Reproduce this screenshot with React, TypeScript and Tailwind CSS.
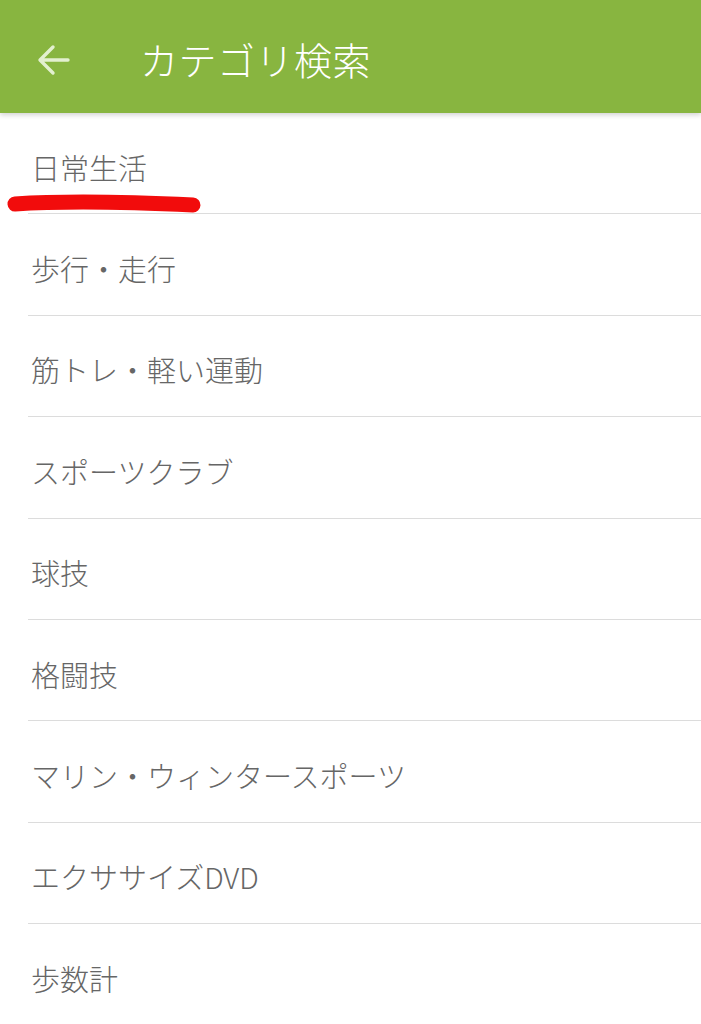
const categories = [
  "日常生活",
  "歩行・走行",
  "筋トレ・軽い運動",
  "スポーツクラブ",
  "球技",
  "格闘技",
  "マリン・ウィンタースポーツ",
  "エクササイズDVD",
  "歩数計",
];

function BackArrow() {
  return (
    <svg width="36" height="36" viewBox="0 0 36 36" fill="none">
      <path
        d="M32 18H5M17 5L4 18l13 13"
        stroke="#e3f0d0"
        strokeWidth="3.4"
        strokeLinecap="round"
        strokeLinejoin="round"
      />
    </svg>
  );
}

export default function App() {
  return (
    <div
      className="w-[701px] h-[1024px] overflow-hidden bg-white relative"
      style={{ fontFamily: '"Noto Sans CJK JP", "Noto Sans", sans-serif' }}
    >
      {/* header */}
      <div className="h-[113px] bg-[#88b540] flex items-center shadow-[0_2px_5px_rgba(0,0,0,0.18)] relative z-10">
        <div className="w-[140px] pl-[36px] pt-[6px] flex items-center">
          <BackArrow />
        </div>
        <h1 className="text-white text-[38px] leading-none pt-[4px] tracking-[0.5px] font-light">
          カテゴリ検索
        </h1>
      </div>

      {/* list */}
      <ul>
        {categories.map((c) => (
          <li
            key={c}
            className="h-[101.4px] ml-[28px] border-b-[1.5px] border-[#dcdcdc] flex items-center pt-[8px] pl-[3px] text-[29px] text-[#666666] leading-none font-light"
          >
            {c}
          </li>
        ))}
      </ul>

      {/* red marker under first item */}
      <svg
        className="absolute left-0 top-[190px] z-20"
        width="220"
        height="30"
        viewBox="0 0 220 30"
      >
        <path
          d="M15 14 C60 11, 130 12, 193 15"
          stroke="#f20c0c"
          strokeWidth="15"
          strokeLinecap="round"
          fill="none"
        />
      </svg>
    </div>
  );
}
